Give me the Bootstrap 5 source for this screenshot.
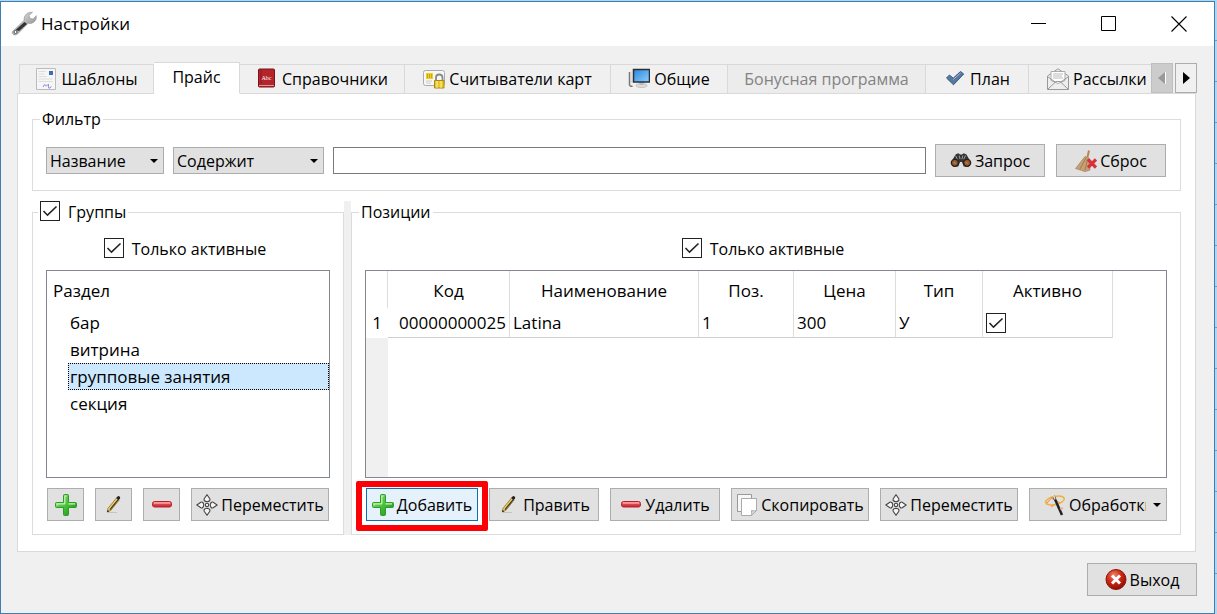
<!DOCTYPE html>
<html lang="ru">
<head>
<meta charset="utf-8">
<meta name="viewport" content="width=device-width, initial-scale=1">
<title>Настройки</title>
<link rel="stylesheet" href="https://cdn.jsdelivr.net/npm/bootstrap@5.3.0/dist/css/bootstrap.min.css">
<style>
  body { font-family: "Open Sans", "Noto Sans", sans-serif; font-size: 16px; line-height: 22px; color: #000;
    background: #b4d5f0 repeating-linear-gradient(#b4d5f0 0 40px, #6f9dc4 40px 41px); padding: 1px 2px 0 0; }
  .win { min-height: calc(100vh - 1px); background: #f0f0f0; border: 1px solid #3c7fb1; }
  .titlebar { height: 44px; background: #fff; padding-left: 10px; }
  .titlebar h1 { font-size: 17px; line-height: 24px; font-weight: 400; margin: 0; }
  .winbtn { width: 70px; height: 43px; border: 0; background: none; padding: 0; }
  .client { padding: 16px 18px 17px 16px; }
  .tabstrip { height: 32px; padding-left: 2px; overflow: hidden; margin-bottom: -1px; position: relative; }
  .tabstrip li { flex: none; display: flex; }
  .tabbtn { width: 100%; height: 30px; border: 1px solid #d9d9d9; border-left-width: 0; background: #f0f0f0; padding: 0; color: #000; white-space: nowrap; }
  .tabstrip li:first-child .tabbtn { border-left-width: 1px; }
  .tabbtn.active { height: 32px; background: #fff; border-bottom-color: #fff; padding-bottom: 2px; }
  .tabbtn:disabled { color: #838383; background: #ececec; }
  .t1 { width: 135px; } .t2 { width: 86px; } .t3 { width: 165px; } .t4 { width: 206px; }
  .t5 { width: 117px; } .t6 { width: 198px; } .t7 { width: 103px; } .t8 { width: 137px; }
  .scrollers { position: absolute; right: -1px; top: 1px; background: #f0f0f0; gap: 2px; height: 30px; }
  .scrollers button { width: 22px; height: 30px; padding: 0; border: 1px solid #adadad; background: #f0f0f0; display: flex; align-items: center; justify-content: center; }
  .scrollers button:disabled { background: #ccc; border-color: #bfbfbf; }
  .panel { background: #fff; border: 1px solid #d9d9d9; padding: 14px 14px 16px; }
  fieldset { border: 1px solid #dcdcdc; padding: 0 13px 13px; min-width: 0; }
  legend { float: none; width: auto; font-size: 16px; line-height: 22px; padding: 0 2px; margin: 0 0 0 -6px; }
  .lead-tick { margin-left: -8px; }
  .filter { margin-bottom: 10px; }
  .filterrow { padding: 14px 1px 0 0; gap: 9px; }
  .pick { height: 27px; border: 1px solid #adadad; border-radius: 0; padding: 0 24px 0 3px; font-size: 16px; line-height: 24px; color: #000; flex: none;
    background: #e1e1e1 url("data:image/svg+xml,%3Csvg xmlns='http://www.w3.org/2000/svg' viewBox='0 0 8 4'%3E%3Cpath d='M0 0h8L4 4z'/%3E%3C/svg%3E") no-repeat right 5px center / 8px 4px; }
  .pick-a { width: 118px; } .pick-b { width: 151px; }
  .query { height: 27px; border: 1px solid #7a7a7a; border-radius: 0; padding: 0 4px; min-width: 0; }
  .tool { height: 33px; border: 1px solid #adadad; background: #e1e1e1; color: #000; padding: 0; display: flex; align-items: center; justify-content: center; gap: 3px; flex: none; white-space: nowrap; }
  .w-icon { width: 37px; } .w-m { width: 110px; } .w-add { width: 112px; } .w-l { width: 138px; }
  .tools, .pair { gap: 11px; }
  .tools { padding: 10px 0 0 1px; }
  .split { width: 7px; background: #f0f0f0; }
  .groups { width: 312px; flex: none; }
  .tick { appearance: none; width: 20px; height: 20px; margin: 0; border: 1px solid #222; background: #fff; flex: none; }
  .tick:checked { background: #fff url("data:image/svg+xml,%3Csvg xmlns='http://www.w3.org/2000/svg' viewBox='0 0 18 18'%3E%3Cpath d='M2.5 9l4 4.2L15.500 4.500' fill='none' stroke='%23222' stroke-width='1.600'/%3E%3C/svg%3E") center / 18px; }
  .onlyactive { padding: 15px 6px 10px 0; gap: 8px; }
  .viewbox { border: 1px solid #828790; background: #fff; min-height: 208px; overflow: hidden; font-size: 17px; }
  .caption { height: 38px; padding: 9px 6px 0; }
  .rows { margin: 0; padding: 0 0 0 21px; list-style: none; }
  .rows button { display: block; width: 100%; height: 27px; border: 1px solid transparent; background: none; padding: 0 1px; text-align: left; line-height: 25px; color: #000; }
  .rows .chosen { background: #cce8ff; border: 1px dotted #000; }
  .gridbox { background: linear-gradient(90deg, #f0f0f0 22px, #fff 22px); }
  .grid { table-layout: fixed; width: 747px; border-collapse: separate; border-spacing: 0; background: #fff; }
  .grid th, .grid td { font-weight: 400; padding: 0 3px; white-space: nowrap; border-right: 1px solid #dcdcdc; }
  .grid thead th { height: 37px; text-align: center; padding-top: 2px; }
  .grid td, .grid tbody th { height: 30px; }
  .grid td { border-bottom: 1px solid #d0d0d0; }
  .grid tbody th { border-right: 0; text-align: center; }
  .mark-red { position: absolute; left: -10px; top: -7px; right: -10px; bottom: -10px; border: 6px solid #fb0007; border-radius: 2px; pointer-events: none; }
  .hot { background: #e5f1fb; border-color: #0f6fb5; }
  .foot { padding-top: 11px; margin-right: -1px; }
  .with-menu { justify-content: flex-end; padding-right: 5px; }
  .cut { width: 77px; overflow: hidden; }
  svg { flex: none; display: block; }
</style>
</head>
<body>
<svg width="0" height="0" class="position-absolute" aria-hidden="true">
  <defs>
    <linearGradient id="gGreen" x2="1" y2="1"><stop stop-color="#8be06f"/><stop offset=".5" stop-color="#4cc13c"/><stop offset="1" stop-color="#168a17"/></linearGradient>
    <linearGradient id="gRed" x2="0" y2="1"><stop stop-color="#f79a9a"/><stop offset=".5" stop-color="#e0474f"/><stop offset="1" stop-color="#c22430"/></linearGradient>
    <linearGradient id="gBlue" x2="1" y2="1"><stop stop-color="#2a86dc"/><stop offset="1" stop-color="#8fd0ff"/></linearGradient>
    <linearGradient id="gMetal" x2="1" y2="1"><stop stop-color="#f4f4f4"/><stop offset="1" stop-color="#777"/></linearGradient>
    <radialGradient id="gExit" cx=".4" cy=".3" r=".7"><stop stop-color="#f08a72"/><stop offset=".5" stop-color="#cf2a14"/><stop offset="1" stop-color="#8c1006"/></radialGradient>
    <symbol id="plus" viewBox="0 0 22 22"><path d="M8.500 1.500q0-1 1-1h3q1 0 1 1v7h7q1 0 1 1v3q0 1-1 1h-7v7q0 1-1 1h-3q-1 0-1-1v-7h-7q-1 0-1-1v-3q0-1 1-1h7z" fill="url(#gGreen)" stroke="#2e9c2b"/><path d="M9.800 10V2h2M2 11.500V9.800h8M13.500 9.800h6.500" fill="none" stroke="#c8f5b8" stroke-width="1.200"/></symbol>
    <symbol id="minus" viewBox="0 0 22 22"><rect x="1.500" y="7.500" width="19" height="5.500" rx="2" fill="url(#gRed)" stroke="#b9202c"/><path d="M3 9h16" stroke="#fbb9b9"/></symbol>
    <symbol id="pencil" viewBox="0 0 22 22"><path d="M5 18.500h9" stroke="#c4c4c4"/><path d="M5 14.300L13.500 4l2.600 2-8.300 10.400-3.500 1.600z" fill="#f0cb63" stroke="#8a7336" stroke-width=".8"/><path d="M7 15.600L15.400 5.400" stroke="#3a3322" stroke-width="1.200"/><path d="M13.200 4l1.300-1.500q1-.8 2.100.1t.3 2.100L15.700 6z" fill="#222"/><path d="M4 18.200l.7-2.300 1.600 1.300z" fill="#222"/></symbol>
    <symbol id="move" viewBox="0 0 22 22"><g fill="#f6f6f6" stroke="#444" stroke-width="1.100"><path id="pt" d="M11 .8l2.800 4q.8 2.400-2.800 3-3.600-.6-2.800-3z"/><use href="#pt" transform="rotate(90 11 11)"/><use href="#pt" transform="rotate(180 11 11)"/><use href="#pt" transform="rotate(270 11 11)"/><circle cx="11" cy="11" r="1.700"/></g></symbol>
  </defs>
</svg>

<main class="win d-flex flex-column">
  <header class="titlebar d-flex align-items-center">
    <svg width="26" height="26" viewBox="0 0 26 26"><path d="M2 20L13 9.500Q12.500 5 16 2.500 18.500 1 21.500 1.200L18 4.500l1 3 3.200.6 3-3.400q.8 4-2.400 6.500-2.500 1.800-5.600 1L6.500 23q-2.500 2-4.400.2T2 20z" fill="url(#gMetal)" stroke="#999" stroke-width=".7"/><path d="M4.500 19l9-8 2.500 2L8 20z" fill="#333"/><circle cx="4.500" cy="21" r="1.500" fill="#fff" stroke="#555"/></svg>
    <h1 class="ms-1 me-auto">Настройки</h1>
    <button class="winbtn" aria-label="Свернуть"><svg class="m-auto" width="16" height="16"><path d="M0 7.500h15" stroke="#000"/></svg></button>
    <button class="winbtn" aria-label="Развернуть"><svg class="m-auto" width="16" height="16"><path d="M.5.5h14v14H.5z" fill="none" stroke="#000"/></svg></button>
    <button class="winbtn" aria-label="Закрыть"><svg class="m-auto" width="16" height="16"><path d="M.5.500l15 15m0-15l-15 15" stroke="#000" stroke-width="1.100"/></svg></button>
  </header>

  <div class="client d-flex flex-column flex-grow-1">
    <div class="position-relative">
      <ul class="nav tabstrip flex-nowrap align-items-end" role="tablist">
        <li class="t1"><button class="tabbtn d-flex align-items-center justify-content-center gap-1" role="tab">
          <svg width="22" height="22" viewBox="0 0 22 22"><path d="M1.500.5h19v21h-19z" fill="#f6f6f6" stroke="#bbb"/><path d="M14 3h4v4h-4z" fill="#3a6fb5"/><path d="M3.500 3.500h7M3.500 6h6M3.500 8.500h8M3.500 11h14M3.500 13.500h14" stroke="#ddd"/><path d="M8 19q2-4 2.500-2t2 0 1 1.500 3 0" fill="none" stroke="#8a83dd"/></svg>Шаблоны</button></li>
        <li class="t2"><button class="tabbtn active" role="tab" aria-selected="true">Прайс</button></li>
        <li class="t3"><button class="tabbtn d-flex align-items-center justify-content-center gap-1" role="tab">
          <svg width="22" height="22" viewBox="0 0 22 22"><rect x="2.500" y="1" width="16" height="18" rx="1" fill="#b3242b" stroke="#7d1418"/><path d="M5 2v14" stroke="#8e181d"/><path d="M3 17.500h15" stroke="#d99"/><text x="5.500" y="12" font-size="6" fill="#fff" font-family="Liberation Serif, serif">Abc</text></svg>Справочники</button></li>
        <li class="t4"><button class="tabbtn d-flex align-items-center justify-content-center gap-1" role="tab">
          <svg width="22" height="22" viewBox="0 0 22 22"><rect x=".5" y="2.500" width="21" height="15" rx="2" fill="#f7f7f7" stroke="#aaa"/><path d="M3 5h7v6H3z" fill="#f1cf20"/><path d="M4 7h5M4 9h5" stroke="#a87b00" stroke-dasharray="1 1"/><path d="M3 13h6M3 15h5" stroke="#ccc"/><path d="M13 13V9.500q0-3 3.200-3t3.300 3V13" fill="none" stroke="#888" stroke-width="1.800"/><path d="M11.500 12.500h9.500v7.500h-9.500z" fill="#e8c62c" stroke="#a78a13"/><path d="M14 13v7m4-7v7" stroke="#fff0a0"/></svg>Считыватели карт</button></li>
        <li class="t5"><button class="tabbtn d-flex align-items-center justify-content-center gap-1" role="tab">
          <svg width="22" height="22" viewBox="0 0 22 22"><path d="M1.500 4v13q1 2 3 1" fill="none" stroke="#777" stroke-width="1.500"/><path d="M3.500 3v12" stroke="#ddd"/><ellipse cx="13.500" cy="17.500" rx="5.500" ry="2" fill="#ddd" stroke="#aaa" stroke-width=".6"/><path d="M11.500 14h4v3h-4z" fill="#bbb"/><path d="M5.500 1.500h16v12.500h-16z" fill="url(#gBlue)" stroke="#2b2f36" stroke-width="1.500"/></svg>Общие</button></li>
        <li class="t6"><button class="tabbtn" role="tab" disabled>Бонусная программа</button></li>
        <li class="t7"><button class="tabbtn d-flex align-items-center justify-content-center gap-1" role="tab">
          <svg width="22" height="22" viewBox="0 0 22 22"><path d="M2.500 10l3-3 3.700 3.200L16.500 3.500l3.200 2.500L9.500 16.800z" fill="#58799f" stroke="#3b597d"/><path d="M9.300 11.500l7.200-6.500" stroke="#9fb8d2"/></svg>План</button></li>
        <li class="t8"><button class="tabbtn d-flex align-items-center gap-1 ps-3" role="tab">
          <svg width="24" height="22" viewBox="-2 0 24 22"><path d="M.5 8L11 .8 21.500 8v13.500H.5z" fill="#eee" stroke="#999"/><path d="M4 3.500h14v9l-7 3-7-3z" fill="#fff" stroke="#aaa"/><path d="M6 6h10M6 8h9M6 10h10" stroke="#bbb"/><path d="M.8 21.200L9 13.500h4l8.200 7.700M1 9l8 5.500M21 9l-8 5.500" fill="none" stroke="#999"/></svg>Рассылки</button></li>
      </ul>
      <div class="scrollers d-flex">
        <button disabled aria-label="Вкладки назад"><svg width="8" height="14"><path d="M7 1v12L0 7z" fill="#999"/><path d="M7.500 1v12" stroke="#fff"/></svg></button>
        <button aria-label="Вкладки вперёд"><svg width="8" height="14"><path d="M1 1v12l7-6z"/></svg></button>
      </div>
    </div>

    <section class="panel d-flex flex-column flex-grow-1">
      <fieldset class="filter">
        <legend>Фильтр</legend>
        <div class="filterrow d-flex align-items-center">
          <select class="pick pick-a form-select" aria-label="Поле"><option>Название</option></select>
          <select class="pick pick-b form-select" aria-label="Условие"><option>Содержит</option></select>
          <input class="query flex-grow-1" type="text" aria-label="Значение">
          <div class="pair d-flex">
            <button class="tool w-m"><svg width="22" height="22" viewBox="0 0 24 22"><path d="M1 13L6 4l3-1.500 2 1.500h2l2-1.500L18 4l5 9-3 4h-5l-2-5h-2l-2 5H4z" fill="#333"/><path d="M6 5l2 4m9-4l-2 4M10 5l1 4m3-4l-1 4" stroke="#aaa"/><circle cx="5.300" cy="13" r="3.800" fill="#9b5a2b" stroke="#222" stroke-width="1.500"/><circle cx="18.700" cy="13" r="3.800" fill="#9b5a2b" stroke="#222" stroke-width="1.500"/><path d="M4 12l2 2m11-2l2 2" stroke="#e39a55"/></svg>Запрос</button>
            <button class="tool w-m"><svg width="22" height="22" viewBox="0 0 22 22"><path d="M14 .5L12.500 7" stroke="#b5855a" stroke-width="2"/><path d="M10 6.500l4 1.500 1 12-5 1.500L.6 18.500z" fill="#c8a075" stroke="#a47b52" stroke-width=".7"/><path d="M11 8L5 19m7.500-10L10 20" stroke="#8f6a44" stroke-width=".7"/><path d="M13 9.500l8 8m0-8l-8 8" stroke="#d6323a" stroke-width="3.200"/></svg>Сброс</button>
          </div>
        </div>
      </fieldset>

      <div class="d-flex flex-grow-1">
        <fieldset class="groups d-flex flex-column">
          <legend class="lead-tick d-flex"><input class="tick me-2" type="checkbox" id="grp" checked><label for="grp">Группы</label></legend>
          <div class="onlyactive d-flex justify-content-center">
            <input class="tick" type="checkbox" id="actA" checked><label for="actA">Только активные</label>
          </div>
          <div class="viewbox flex-grow-1">
            <div class="caption">Раздел</div>
            <ul class="rows">
              <li><button>бар</button></li>
              <li><button>витрина</button></li>
              <li><button class="chosen">групповые занятия</button></li>
              <li><button>секция</button></li>
            </ul>
          </div>
          <div class="tools d-flex">
            <button class="tool w-icon" aria-label="Добавить группу"><svg width="22" height="22"><use href="#plus"/></svg></button>
            <button class="tool w-icon" aria-label="Править группу"><svg width="22" height="22"><use href="#pencil"/></svg></button>
            <button class="tool w-icon" aria-label="Удалить группу"><svg width="22" height="22"><use href="#minus"/></svg></button>
            <button class="tool w-l"><svg width="22" height="22"><use href="#move"/></svg>Переместить</button>
          </div>
        </fieldset>
        <div class="split"></div>
        <fieldset class="d-flex flex-column flex-grow-1">
          <legend>Позиции</legend>
          <div class="onlyactive d-flex justify-content-center">
            <input class="tick" type="checkbox" id="actB" checked><label for="actB">Только активные</label>
          </div>
          <div class="viewbox gridbox flex-grow-1">
            <table class="grid">
              <colgroup><col style="width:22px"><col style="width:122px"><col style="width:189px"><col style="width:95px"><col style="width:102px"><col style="width:87px"><col style="width:130px"></colgroup>
              <thead><tr><th></th><th>Код</th><th>Наименование</th><th>Поз.</th><th>Цена</th><th>Тип</th><th>Активно</th></tr></thead>
              <tbody><tr><th>1</th><td class="text-end">00000000025</td><td>Latina</td><td>1</td><td>300</td><td>У</td><td><input class="tick d-block" type="checkbox" checked aria-label="Активно"></td></tr></tbody>
            </table>
          </div>
          <div class="tools d-flex">
            <div class="position-relative"><button class="tool hot w-add"><svg width="22" height="22"><use href="#plus"/></svg>Добавить</button><span class="mark-red"></span></div>
            <button class="tool w-m"><svg width="22" height="22"><use href="#pencil"/></svg>Править</button>
            <button class="tool w-m"><svg width="22" height="22"><use href="#minus"/></svg>Удалить</button>
            <button class="tool w-l"><svg width="22" height="22" viewBox="0 0 22 22"><path d="M1.500.5h14v17h-14z" fill="#f7f7f7" stroke="#999"/><path d="M5.500 4.500h15v12l-5 5h-10z" fill="#fff" stroke="#aaa"/><path d="M15.500 21.500q.5-2 0-5 3 1 5 0z" fill="#ddd" stroke="#aaa"/></svg>Скопировать</button>
            <button class="tool w-l"><svg width="22" height="22"><use href="#move"/></svg>Переместить</button>
            <button class="tool w-l with-menu"><svg width="22" height="22" viewBox="0 0 22 22"><ellipse cx="11" cy="6.500" rx="9.500" ry="4" fill="none" stroke="#f0b03c" stroke-width="1.500" transform="rotate(-12 11 6.500)"/><path d="M3 9q4-5 8-8M7 4l9 5" stroke="#f08a3c" fill="none"/><path d="M10 3l8 18" stroke="#222" stroke-width="2.500"/><path d="M9.500 1.500l1.500 4" stroke="#ddd" stroke-width="1.500"/><path d="M7 13l3-2m6 4l3-1" stroke="#f4a07a" stroke-width="1.500"/></svg><span class="cut">Обработки</span><svg class="ms-1" width="8" height="4"><path d="M0 0h8L4 4z"/></svg></button>
          </div>
        </fieldset>
      </div>
    </section>
    <footer class="foot d-flex justify-content-end">
      <button class="tool w-m"><svg width="22" height="22" viewBox="0 0 22 22"><circle cx="11" cy="10.500" r="10" fill="url(#gExit)" stroke="#8c1409"/><path d="M7 6.500l8 8m0-8l-8 8" stroke="#fff" stroke-width="3"/></svg>Выход</button>
    </footer>
  </div>
</main>
<script src="https://cdn.jsdelivr.net/npm/bootstrap@5.3.0/dist/js/bootstrap.bundle.min.js"></script>
</body>
</html>
